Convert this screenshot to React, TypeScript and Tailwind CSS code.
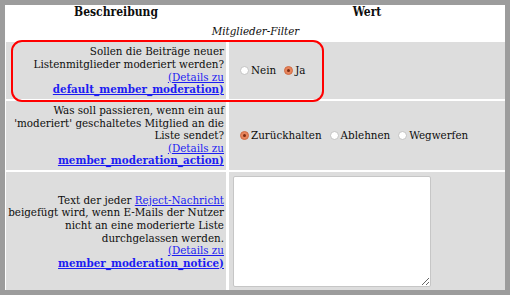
import * as React from "react";

function Radio({ checked }: { checked?: boolean }) {
  return (
    <svg width="9" height="9" viewBox="0 0 9 9" className="shrink-0">
      {checked ? (
        <>
          <circle cx="4.5" cy="4.5" r="4" fill="#e8845c" stroke="#cf6d46" strokeWidth="1" />
          <circle cx="4.5" cy="4.5" r="1.5" fill="#7a2c12" />
        </>
      ) : (
        <circle cx="4.5" cy="4.5" r="4" fill="#ffffff" stroke="#c2c2c2" strokeWidth="1" />
      )}
    </svg>
  );
}

function Option({ label, checked }: { label: string; checked?: boolean }) {
  return (
    <label className="flex items-center gap-[2px]">
      <Radio checked={checked} />
      <span>{label}</span>
    </label>
  );
}

function DetailsLink({ name }: { name: string }) {
  return (
    <>
      <span className="block whitespace-nowrap">
        <a href="#" className="text-[#1c1cf2] underline">
          (Details zu
        </a>
      </span>
      <span className="block whitespace-nowrap">
        <a href="#" className="text-[#1c1cf2] underline font-bold">
          {name})
        </a>
      </span>
    </>
  );
}

function Lines({ lines }: { lines: React.ReactNode[] }) {
  return (
    <>
      {lines.map((l, i) => (
        <span key={i} className="block whitespace-nowrap">
          {l}
        </span>
      ))}
    </>
  );
}

export default function App() {
  return (
    <div className="relative w-[510px] h-[295px] bg-[#9c9c9c] pt-[5px] pl-[5px] overflow-hidden font-['DejaVu_Serif_Condensed','DejaVu_Serif',serif]">
      <div className="w-[500px] h-[285px] bg-white overflow-hidden pl-[1px] text-[11.5px] leading-[12.6px] text-[#0d0d0d]">
        <div className="grid grid-cols-[220px_1fr] gap-x-[3px] gap-y-[2px]">
          {/* header */}
          <div className="h-[14px] flex items-center justify-center font-bold text-[12px]">Beschreibung</div>
          <div className="h-[14px] flex items-center justify-center font-bold text-[12px]">Wert</div>
          <div className="col-span-2 h-[19px] flex items-center justify-center italic pt-[1px]">Mitglieder-Filter</div>

          {/* row 1 */}
          <div className="h-[57px] bg-[#dddddd] flex flex-col justify-center items-end text-right pr-[2px]">
            <Lines lines={["Sollen die Beiträge neuer", "Listenmitglieder moderiert werden?"]} />
            <DetailsLink name="default_member_moderation" />
          </div>
          <div className="h-[57px] bg-[#dddddd] flex items-center pl-[11px] gap-[8px]">
            <Option label="Nein" />
            <Option label="Ja" checked />
          </div>

          {/* row 2 */}
          <div className="h-[69px] bg-[#dddddd] flex flex-col justify-center items-end text-right pr-[2px]">
            <Lines
              lines={["Was soll passieren, wenn ein auf", "'moderiert' geschaltetes Mitglied an die", "Liste sendet?"]}
            />
            <DetailsLink name="member_moderation_action" />
          </div>
          <div className="h-[69px] bg-[#dddddd] flex items-center pl-[11px] gap-[8px]">
            <Option label="Zurückhalten" checked />
            <Option label="Ablehnen" />
            <Option label="Wegwerfen" />
          </div>

          {/* row 3 */}
          <div className="h-[119px] bg-[#dddddd] flex flex-col justify-center items-end text-right pr-[2px]">
            <Lines
              lines={[
                <>
                  Text der jeder{" "}
                  <a href="#" className="text-[#1c1cf2] underline">
                    Reject-Nachricht
                  </a>
                </>,
                "beigefügt wird, wenn E-Mails der Nutzer",
                "nicht an eine moderierte Liste",
                "durchgelassen werden.",
              ]}
            />
            <DetailsLink name="member_moderation_notice" />
          </div>
          <div className="h-[119px] bg-[#dddddd] pt-[4px] pl-[4px]">
            <textarea className="block w-[198px] h-[111px] bg-white border border-[#c6c6c6] rounded-[2px] outline-none" />
          </div>
        </div>
      </div>

      {/* annotation */}
      <div className="pointer-events-none absolute left-[11px] top-[40px] w-[313px] h-[62px] border-2 border-[#ff0000] rounded-[11px]" />
    </div>
  );
}
